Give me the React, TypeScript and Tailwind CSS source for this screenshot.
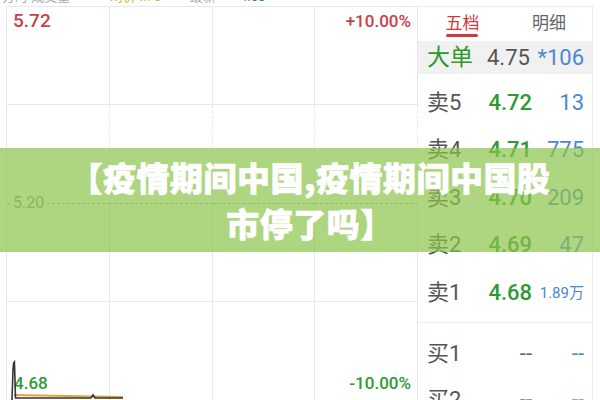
import React from 'react'

const sans = "font-['Roboto','Noto_Sans_CJK_SC',sans-serif]"

type Level = { label: string; price: string; vol: string; unit?: string; priceCls: string; volCls: string }

const sells: Level[] = [
  { label: '卖5', price: '4.72', vol: '13', priceCls: 'text-[#2e9a33] font-medium', volCls: 'text-[#4a88d0]' },
  { label: '卖4', price: '4.71', vol: '775', priceCls: 'text-[#2e9a33] font-medium', volCls: 'text-[#4a88d0]' },
  { label: '卖3', price: '4.70', vol: '209', priceCls: 'text-[#2e9a33] font-medium', volCls: 'text-[#4a88d0]' },
  { label: '卖2', price: '4.69', vol: '47', priceCls: 'text-[#2e9a33] font-medium', volCls: 'text-[#4a88d0]' },
  { label: '卖1', price: '4.68', vol: '1.89', unit: '万', priceCls: 'text-[#2e9a33] font-medium', volCls: 'text-[#4a88d0]' },
]

const buys: Level[] = [
  { label: '买1', price: '--', vol: '--', priceCls: 'text-[#666]', volCls: 'text-[#4a88d0]' },
  { label: '买2', price: '--', vol: '--', priceCls: 'text-[#666]', volCls: 'text-[#4a88d0]' },
]

function LevelRow({ row, h }: { row: Level; h: string }) {
  return (
    <div className={`flex items-center ${h} pl-[9px] pr-[8px]`}>
      <span className="w-[52px] text-[22px] text-[#555] leading-none">{row.label}</span>
      <span className={`w-[53px] text-right text-[22px] leading-none ${row.priceCls}`}>{row.price}</span>
      <span className={`flex-1 text-right leading-none ${row.volCls}`}>
        {row.unit ? (
          <span className="text-[15px]">
            {row.vol}
            {row.unit}
          </span>
        ) : (
          <span className="text-[22px]">{row.vol}</span>
        )}
      </span>
    </div>
  )
}

function Chart() {
  const cells = Array.from({ length: 16 })
  return (
    <div className="relative w-[412px] h-[394px] border-l border-t border-[#e8e8e8]">
      <div className="grid grid-cols-4 grid-rows-4 h-full">
        {cells.map((_, i) => (
          <div
            key={i}
            className={
              'border-r border-[#e8e8e8] ' +
              (i < 4 || (i >= 8 && i < 12) ? 'border-b' : i < 8 ? 'border-b border-dashed border-b-[#a8a8a8]' : '')
            }
          />
        ))}
      </div>

      {/* price labels */}
      <span className="absolute left-[6px] top-[4px] text-[19px] font-medium text-[#c8404a] leading-none">5.72</span>
      <span className="absolute right-[7px] top-[6px] text-[17px] font-medium text-[#c8404a] leading-none">+10.00%</span>
      <span className="absolute left-[4px] top-[188px] bg-white px-[2px] text-[16px] text-[#8e8e8e] leading-none">5.20</span>
      <span className="absolute left-[7px] top-[368px] text-[17px] font-medium text-[#2e9a33] leading-none">4.68</span>
      <span className="absolute right-[7px] top-[368px] text-[17px] font-medium text-[#2e9a33] leading-none">-10.00%</span>

      {/* intraday line */}
      <svg className="absolute left-0 bottom-0" width="130" height="40" viewBox="0 0 130 40">
        <path d="M7 35 L60 36 L116 37" fill="none" stroke="#e0a43a" strokeWidth="2" />
        <path
          d="M5 40 L6 10 L6.6 3 L7.4 2 L8 20 L8.5 38 L84 38 L86 35 L88 38 L116 38"
          fill="none"
          stroke="#333"
          strokeWidth="1.6"
        />
      </svg>
    </div>
  )
}

function Quotes() {
  return (
    <div className="w-[175px] h-[394px] border-t border-r border-[#ececec] overflow-hidden">
      <div className="flex h-[34px] items-center text-[17px]">
        <div className="relative w-[88px] text-center text-[#d0393a] pl-[1px]">
          五档
          <div className="absolute left-[28px] top-[23px] w-[32px] h-[3px] rounded-full bg-[#d0393a]" />
        </div>
        <div className="flex-1 text-center text-[#666]">明细</div>
      </div>

      <div className="flex items-center h-[33px] bg-[#f1f1f1] pl-[9px] pr-[8px]">
        <span className="w-[60px] text-[23px] text-[#2a9a2a] leading-none">大单</span>
        <span className="text-[22px] text-[#555] leading-none">4.75</span>
        <span className="flex-1 text-right text-[22px] text-[#4a88d0] leading-none">*106</span>
      </div>

      <div className="pt-[5px] pb-[5px] border-b border-[#ececec]">
        {sells.map((r) => (
          <LevelRow key={r.label} row={r} h="h-[47.5px]" />
        ))}
      </div>
      <div className="pt-[8px]">
        {buys.map((r) => (
          <LevelRow key={r.label} row={r} h="h-[46px]" />
        ))}
      </div>
    </div>
  )
}

export default function App() {
  return (
    <div className={`relative w-[600px] h-[400px] overflow-hidden bg-white ${sans}`}>
      {/* header row, scrolled mostly out of view */}
      <div className="h-[6px] overflow-hidden">
        <div className="flex -mt-[13px] h-[16px] items-end text-[13px] leading-none text-[#aaa]">
          <span className="w-[110px] pl-[2px]">分时 成交量</span>
          <span className="w-[80px] text-[#c9b63c]">均价4.70</span>
          <span className="w-[50px]">最新</span>
          <span className="w-[60px] text-[#2e9a33]">4.68</span>
          <span className="ml-auto mr-[30px]">⋯</span>
        </div>
      </div>

      <div className="flex pl-[6px]">
        <Chart />
        <Quotes />
      </div>

      {/* headline banner */}
      <div className="absolute inset-x-0 top-[148px] h-[104px] bg-[#8bc34a]/70 flex items-center justify-center pl-[20px]">
        <div className="text-center text-white text-[33px] font-black leading-[46px] tracking-[0.5px] font-['Noto_Sans_CJK_SC',sans-serif] [-webkit-text-stroke:0.7px_white]">
          【疫情期间中国,疫情期间中国股
          <br />
          市停了吗】
        </div>
      </div>
    </div>
  )
}
